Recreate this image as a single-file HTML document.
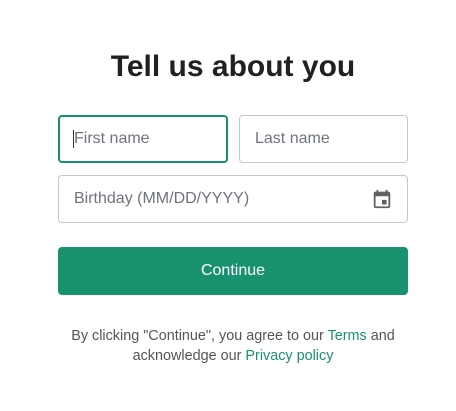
<!DOCTYPE html>
<html><head><style>
body{margin:0;width:456px;height:411px;background:#fff;font-family:"Liberation Sans",sans-serif;position:relative;overflow:hidden}
h1{position:absolute;top:48px;left:0;width:466px;text-align:center;margin:0;font-size:30px;font-weight:bold;color:#202123;line-height:38px}
.in{position:absolute;box-sizing:border-box;border:1px solid #c2c8d0;border-radius:4px;font-size:16px;color:#6e7380;padding-left:15px;display:flex;align-items:center}
.btn{position:absolute;left:58px;top:247px;width:350px;height:48px;background:#18916f;border-radius:4px;color:#fff;font-size:16px;display:flex;align-items:center;justify-content:center}
.t{position:absolute;top:326px;left:0;width:466px;text-align:center;font-size:14.4px;line-height:20px;color:#555}
.t span{color:#18916f}
</style></head><body>
<h1>Tell us about you</h1>
<div class="in" style="left:58px;top:115px;width:170px;height:48px;border:2px solid #18916f;padding-left:13px"><span style="display:inline-block;width:1px;height:18px;background:#333;margin-right:0"></span>First name</div>
<div class="in" style="left:239px;top:115px;width:169px;height:48px">Last name</div>
<div class="in" style="left:58px;top:175px;width:350px;height:48px">Birthday (MM/DD/YYYY)
<svg style="position:absolute;right:14px;top:12px" width="22" height="22" viewBox="0 0 24 24"><path fill="#5f6368" d="M19 4h-1V2h-2v2H8V2H6v2H5c-1.1 0-2 .9-2 2v14c0 1.1.9 2 2 2h14c1.1 0 2-.9 2-2V6c0-1.1-.9-2-2-2zm0 16H5V9h14v11zm-7-7h5v5h-5z" /></svg></div>
<div class="btn">Continue</div>
<div class="t">By clicking "Continue", you agree to our <span>Terms</span> and<br>acknowledge our <span>Privacy policy</span></div>
</body></html>
